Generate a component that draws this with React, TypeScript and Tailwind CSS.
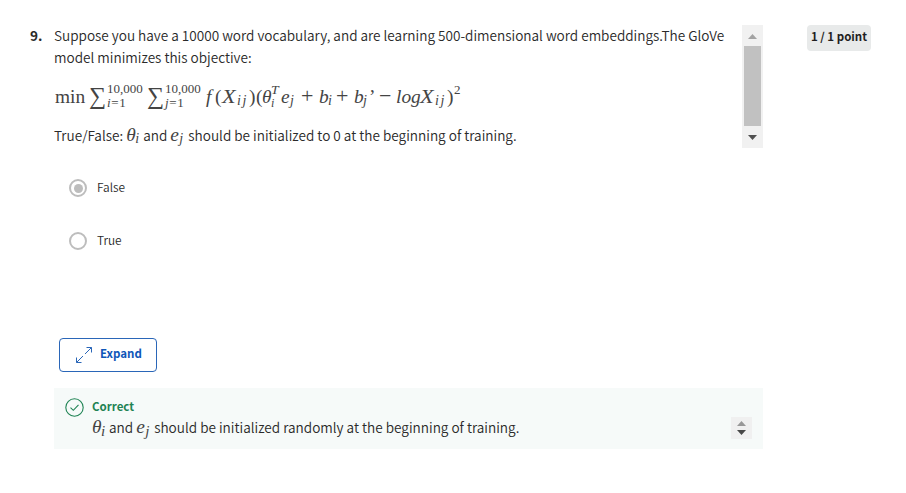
import type { ReactNode } from "react";

const Item = ({ c, children }: { c: string; children: ReactNode }) => (
  <span className={`block shrink-0 whitespace-nowrap ${c}`}>{children}</span>
);

const SERIF = "font-['Liberation_Serif',serif] font-normal text-[#444]";

function Sum({ index, c }: { index: string; c: string }) {
  return (
    <>
      <Item c="w-[18px] -ml-px text-[24px] leading-[19px]">∑</Item>
      <span className={`-mt-[5px] flex shrink-0 flex-col text-[13px] leading-[14px] ${c}`}>
        <span>10,000</span>
        <span className="whitespace-nowrap tracking-[0.7px]">
          <i>{index}</i>=1
        </span>
      </span>
    </>
  );
}

function Formula() {
  return (
    <div className={`mt-[19px] flex h-[22px] items-start pl-px text-[19.4px] leading-[20px] ${SERIF}`}>
      <Item c="w-[35px]">min</Item>
      <Sum index="i" c="w-[41px]" />
      <Sum index="j" c="w-[41px]" />
      <Item c="w-[9px] italic">f</Item>
      <Item c="w-[7px]">(</Item>
      <Item c="w-[15px] origin-left scale-x-115 italic">X</Item>
      <Item c="mt-[4px] w-[12px] text-[14px] italic tracking-[1.5px]">ij</Item>
      <Item c="w-[7px]">)</Item>
      <Item c="w-[6px]">(</Item>
      <Item c="w-[9px] italic">θ</Item>
      <span className="-mt-[3px] flex w-[10px] shrink-0 flex-col text-[12px] italic leading-[13px]">
        <span className="origin-left scale-x-115">T</span>
        <span>i</span>
      </span>
      <Item c="w-[9px] italic">e</Item>
      <Item c="mt-[4px] w-[11px] text-[14px] italic">j</Item>
      <Item c="-mt-px w-[18px] text-[22px]">+</Item>
      <Item c="w-[9px] italic">b</Item>
      <Item c="mt-[4px] w-[8px] text-[14px] italic">i</Item>
      <Item c="-mt-px w-[18px] text-[22px]">+</Item>
      <Item c="w-[9px] italic">b</Item>
      <Item c="mt-[4px] w-[6px] text-[14px] italic">j</Item>
      <Item c="w-[10px]">’</Item>
      <Item c="-mt-px w-[17px] text-[22px]">−</Item>
      <Item c="w-[24px] italic">log</Item>
      <Item c="w-[15px] origin-left scale-x-115 italic">X</Item>
      <Item c="mt-[4px] w-[12px] text-[14px] italic tracking-[1.5px]">ij</Item>
      <Item c="w-[7px]">)</Item>
      <Item c="-mt-[7px] text-[13px]">2</Item>
    </div>
  );
}

function Triangle({ c, up }: { c: string; up?: boolean }) {
  return (
    <svg className={`h-[5px] w-[9px] ${c}`} viewBox="0 0 9 5" fill="currentColor">
      <path d={up ? "M0 5L4.5 0L9 5Z" : "M0 0L4.5 5L9 0Z"} />
    </svg>
  );
}

function Option({ label, selected }: { label: string; selected?: boolean }) {
  return (
    <div className="flex h-[20px] items-center">
      <span className="flex size-[18px] items-center justify-center rounded-full border-2 border-[#bdbdbd]">
        {selected && <span className="size-[9px] rounded-full bg-[#bdbdbd]" />}
      </span>
      <span className="-mt-[3px] ml-[10px] text-[11.9px] leading-[20px]">{label}</span>
    </div>
  );
}

export default function App() {
  return (
    <div className="flex h-[493px] w-[906px] bg-white font-['Noto_Sans_CJK_SC','Noto_Sans',sans-serif] text-[13.59px] font-[350] text-[#2a2a2a]">
      <div className="w-[54px] shrink-0 pl-[30px] pt-[24px] font-bold leading-[22px]">9.</div>
      <main className="w-[709px] shrink-0 pt-[25px]">
        <section className="flex h-[123px] justify-between">
          <div className="whitespace-nowrap leading-[22px]">
            <p className="-mt-px">Suppose you have a 10000 word vocabulary, and are learning 500-dimensional word embeddings.The GloVe</p>
            <p>model minimizes this objective:</p>
            <Formula />
            <p className="mt-[15px] flex h-[22px]">
              <span>True/False:</span>
              <Item c={`ml-[3px] w-[9px] text-[19.4px] italic ${SERIF}`}>θ</Item>
              <Item c={`mt-[4px] w-[8px] text-[14px] italic ${SERIF}`}>i</Item>
              <span>and</span>
              <Item c={`ml-[3px] w-[9px] text-[19.4px] italic ${SERIF}`}>e</Item>
              <Item c={`mt-[4px] w-[9px] text-[14px] italic ${SERIF}`}>j</Item>
              <span>should be initialized to 0 at the beginning of training.</span>
            </p>
          </div>
          <div className="flex w-[21px] flex-col items-center bg-[#f1f1f1]">
            <div className="flex h-[21px] items-center pt-[2px]"><Triangle up c="text-[#a3a3a3]" /></div>
            <div className="h-[80px] w-[17px] bg-[#c1c1c1]" />
            <div className="flex h-[22px] items-center"><Triangle c="text-[#505050]" /></div>
          </div>
        </section>

        <div className="ml-[15px] mt-[30px] flex flex-col gap-[33px]">
          <Option label="False" selected />
          <Option label="True" />
        </div>

        <button className="ml-[5px] mt-[87px] flex h-[34px] w-[98px] items-center rounded-[4px] border border-[#2a66b8] pl-[15px] text-[#0f56b8]">
          <svg className="-mt-px size-[18px]" viewBox="0 0 18 18" fill="none" stroke="#2a66b8" strokeWidth="1">
            <path d="M10 8L16.5 1.5M11.5 1.5H16.5V6.5M8 10L1.5 16.5M1.5 11.5V16.5H6.5" />
          </svg>
          <span className="-mt-[4px] ml-[7px] text-[11.5px] font-bold leading-[20px]">Expand</span>
        </button>

        <section className="mt-[16px] flex h-[61px] w-[709px] bg-[#f6faf9]">
          <svg className="ml-[11px] mt-[10px] size-[19px] shrink-0" viewBox="0 0 19 19" fill="none" stroke="#1f8354" strokeWidth="1.1">
            <circle cx="9.5" cy="9.5" r="8.7" />
            <path d="M5.5 9.7L8.3 12.3L13.5 6.8" />
          </svg>
          <div className="ml-[8px] flex-1 whitespace-nowrap pt-[8px]">
            <p className="text-[11.5px] font-bold leading-[20px] text-[#1f8354]">Correct</p>
            <p className="flex h-[22px] leading-[22px]">
              <Item c={`w-[9px] text-[19.4px] italic ${SERIF}`}>θ</Item>
              <Item c={`mt-[4px] w-[8px] text-[15px] italic ${SERIF}`}>i</Item>
              <span>and</span>
              <Item c={`ml-[3px] w-[9px] text-[19.4px] italic ${SERIF}`}>e</Item>
              <Item c={`mt-[4px] w-[9px] text-[15px] italic ${SERIF}`}>j</Item>
              <span>should be initialized randomly at the beginning of training.</span>
            </p>
          </div>
          <div className="mr-[11px] mt-[29px] flex h-[22px] w-[21px] flex-col items-center justify-center gap-[4px] bg-[#f0f0f0]">
            <Triangle up c="text-[#989898]" />
            <Triangle c="text-[#484848]" />
          </div>
        </section>
      </main>
      <div className="ml-[44px] mt-[25px] flex h-[26px] w-[64px] shrink-0 items-center justify-center whitespace-nowrap rounded-[4px] bg-[#e8eaea] pb-[2px] text-[11.5px] font-bold text-[#1f1f1f]">
        1 / 1 point
      </div>
    </div>
  );
}
